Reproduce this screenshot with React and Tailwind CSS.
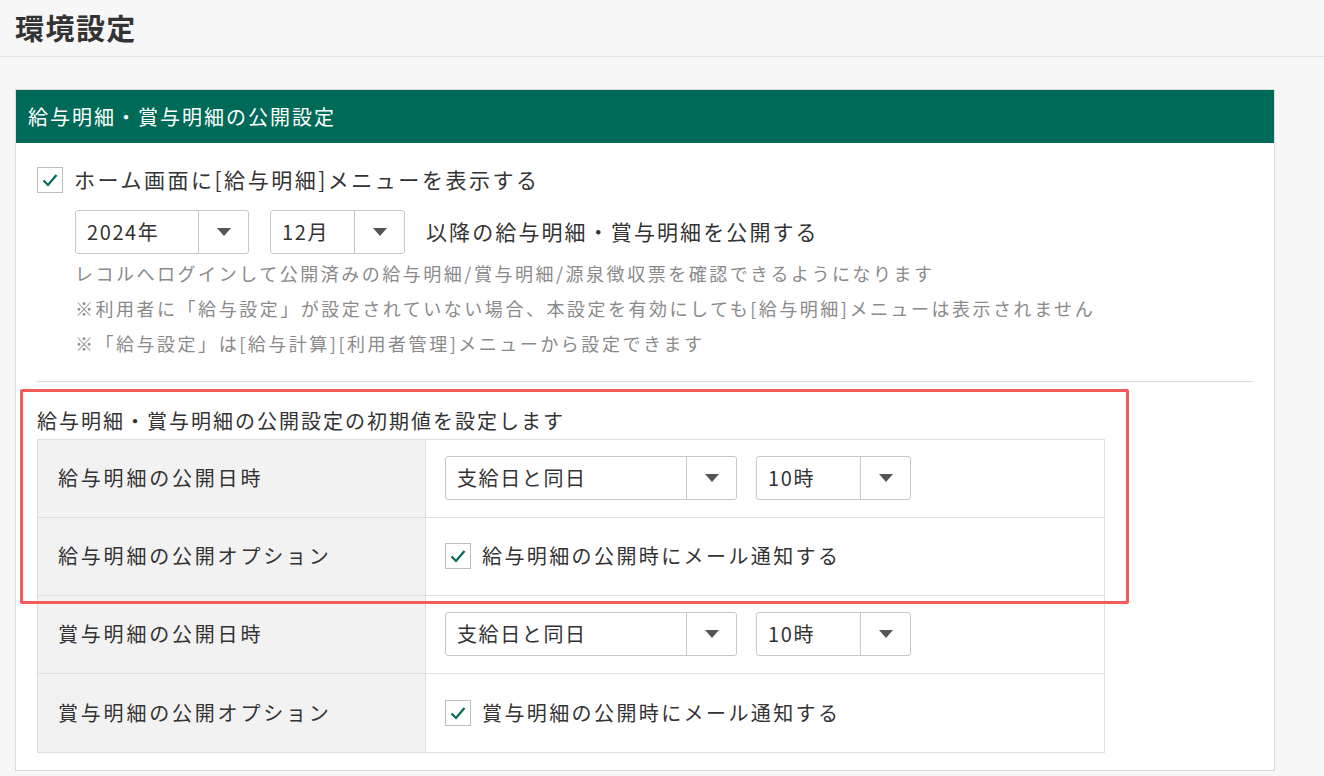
const F = { fontFamily: '"Noto Sans CJK JP", "Noto Sans", sans-serif' };

function Check() {
  return (
    <span className="inline-flex items-center justify-center w-[26px] h-[26px] border border-[#bdbdbd] bg-white shrink-0">
      <svg width="18" height="18" viewBox="0 0 18 18"><path d="M2.5 9.5 L7 14 L15.5 4" fill="none" stroke="#00695a" strokeWidth="2.2" /></svg>
    </span>
  );
}

function Sel({ label, w, arrowW = 50 }) {
  return (
    <div className="flex h-[44px] border border-[#c8c8c8] rounded-[3px] bg-white text-[20px] tracking-[0.08em] text-[#333]" style={{ width: w }}>
      <div className="flex-1 flex items-center pl-[11px]">{label}</div>
      <div className="flex items-center justify-center border-l border-[#c8c8c8]" style={{ width: arrowW }}>
        <svg width="16" height="10" viewBox="0 0 16 10"><path d="M1 1 L15 1 L8 9 Z" fill="#555" /></svg>
      </div>
    </div>
  );
}

function Row({ label, children }) {
  return (
    <div className="flex h-[78px] border-b border-[#dedede] last:border-b-0">
      <div className="w-[388px] bg-[#f2f2f2] border-r border-[#dedede] flex items-center pl-[20px] text-[20px] tracking-[0.14em] text-[#333]">{label}</div>
      <div className="flex-1 flex items-center pl-[19px] gap-[19px] bg-white">{children}</div>
    </div>
  );
}

export default function App() {
  return (
    <div className="relative w-[1324px] h-[776px] bg-[#f7f7f7] overflow-hidden" style={F}>
      <div className="h-[57px] border-b border-[#e2e2e2] flex items-center pl-[15px]">
        <h1 className="text-[29px] font-bold tracking-[0.05em] text-[#333]">環境設定</h1>
      </div>
      <div className="ml-[15px] mt-[32px] w-[1260px] bg-white border border-[#dcdcdc]">
        <div className="h-[53px] bg-[#006a58] flex items-center pl-[12px] text-white text-[20px] tracking-[0.1em]">給与明細・賞与明細の公開設定</div>
        <div className="pl-[21px] pr-[21px] pt-[21px]">
          <div className="flex items-center gap-[11px] text-[21px] tracking-[0.12em] text-[#333]"><Check />ホーム画面に[給与明細]メニューを表示する</div>
          <div className="pl-[38px] mt-[14px] flex items-center gap-[21px] text-[21px] tracking-[0.1em] text-[#333]">
            <Sel label="2024年" w={174} />
            <Sel label="12月" w={135} />
            <span>以降の給与明細・賞与明細を公開する</span>
          </div>
          <div className="pl-[38px] mt-[2px] text-[18px] leading-[35px] tracking-[0.14em] text-[#8a8a8a]">
            <div>レコルへログインして公開済みの給与明細/賞与明細/源泉徴収票を確認できるようになります</div>
            <div>※利用者に「給与設定」が設定されていない場合、本設定を有効にしても[給与明細]メニューは表示されません</div>
            <div>※「給与設定」は[給与計算][利用者管理]メニューから設定できます</div>
          </div>
          <div className="h-px bg-[#dcdcdc] mt-[20px]" />
          <div className="mt-[20px] text-[20px] tracking-[0.1em] text-[#333] leading-[37px]">給与明細・賞与明細の公開設定の初期値を設定します</div>
          <div className="w-[1068px] border border-[#dedede] mb-[17px]">
            <Row label="給与明細の公開日時"><Sel label="支給日と同日" w={292} /><Sel label="10時" w={155} /></Row>
            <Row label="給与明細の公開オプション"><div className="flex items-center gap-[11px] text-[20px] tracking-[0.12em] text-[#333]"><Check />給与明細の公開時にメール通知する</div></Row>
            <Row label="賞与明細の公開日時"><Sel label="支給日と同日" w={292} /><Sel label="10時" w={155} /></Row>
            <Row label="賞与明細の公開オプション"><div className="flex items-center gap-[11px] text-[20px] tracking-[0.12em] text-[#333]"><Check />賞与明細の公開時にメール通知する</div></Row>
          </div>
        </div>
      </div>
      <div className="absolute left-[20px] top-[389px] w-[1109px] h-[215px] border-[3px] border-[#f35b5b] rounded-[2px] pointer-events-none" />
    </div>
  );
}
